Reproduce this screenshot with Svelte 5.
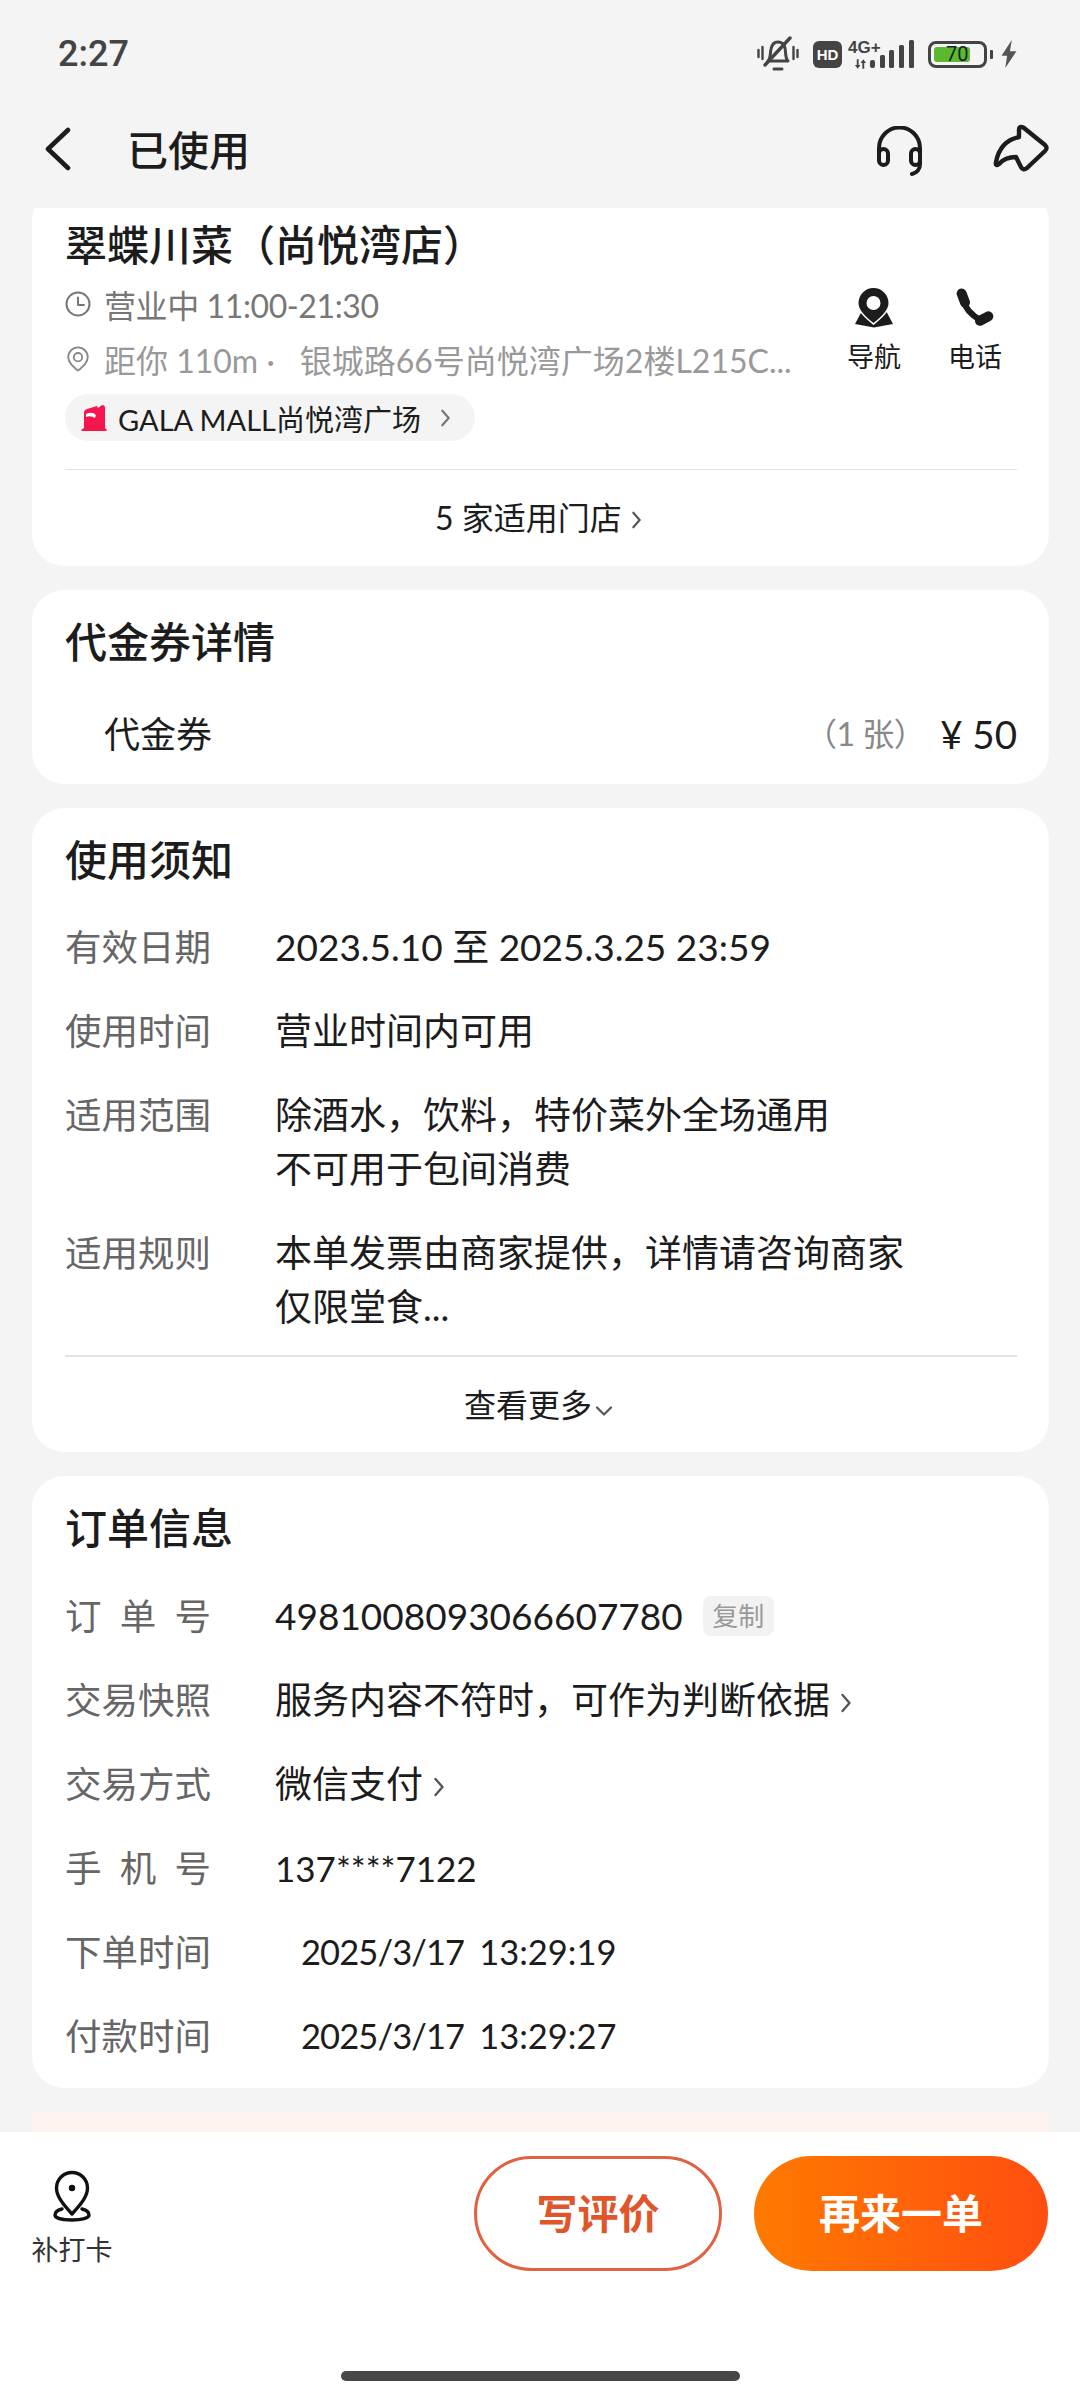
<script>
  const usage = [
    { label: '有效日期', lines: ['2023.5.10 至 2025.3.25 23:59'] },
    { label: '使用时间', lines: ['营业时间内可用'] },
    { label: '适用范围', lines: ['除酒水，饮料，特价菜外全场通用', '不可用于包间消费'] },
    { label: '适用规则', lines: ['本单发票由商家提供，详情请咨询商家', '仅限堂食...'] }
  ];
</script>

{#snippet chevron(cls)}
  <svg class={cls} viewBox="0 0 12 22" fill="none" stroke="currentColor" stroke-width="2.4" stroke-linecap="round" stroke-linejoin="round"><path d="M2.5 3l7 8-7 8" /></svg>
{/snippet}

<div class="page">
  <div class="status">
    <span class="time">2:27</span>
    <div class="status-icons">
      <svg class="ic-bell" viewBox="0 0 42 36" fill="none" stroke="#444" stroke-linecap="round">
        <path d="M1.5 14v7M5.5 11v12M36.5 11v12M40.5 14v7" stroke-width="2.4" />
        <path d="M11 25c3-3 2-8 3-12 1-5 4-7 7-7s6 2 7 6c1 5 0 10 3 13z" stroke-width="3" stroke-linejoin="round" />
        <path d="M17 33h8" stroke-width="3" />
        <path d="M8 29L33 2" stroke-width="3.4" />
      </svg>
      <span class="hd">HD</span>
      <div class="net">
        <span class="g4">4G+</span>
        <svg class="ic-arrows" viewBox="0 0 14 10" fill="#444"><path d="M3 0h2v6h2L4 10 1 6h2zM9 10h2V4h2L10 0 7 4h2z" /></svg>
      </div>
      <svg class="ic-signal" viewBox="0 0 44 28" fill="#444">
        <rect x="0" y="20" width="5" height="8" rx="2" />
        <rect x="10" y="15" width="5" height="13" rx="1.5" />
        <rect x="19" y="10" width="5" height="18" rx="1.5" />
        <rect x="29" y="5" width="5" height="23" rx="1.5" />
        <rect x="39" y="0" width="5" height="28" rx="1.5" />
      </svg>
      <div class="battery"><div class="battery-fill"></div><span>70</span></div>
      <div class="nub"></div>
      <svg class="ic-bolt" viewBox="0 0 18 30" fill="#555"><path d="M12 0L1 17h6L5 30l12-18h-7z" /></svg>
    </div>
  </div>

  <div class="nav">
    <svg class="back" viewBox="0 0 26 44" fill="none" stroke="#1c1c1c" stroke-width="4.6" stroke-linecap="round" stroke-linejoin="round"><path d="M23 3L3 22l20 19" /></svg>
    <h1>已使用</h1>
    <svg class="ic-headset" viewBox="0 0 47 50" fill="none" stroke="#1c1c1c" stroke-width="4" stroke-linecap="round" stroke-linejoin="round">
      <path d="M3 30V22a20.5 20.5 0 0 1 41 0v16c0 5-3 9-8 10" />
      <rect x="3" y="23" width="9" height="16" rx="4.5" />
      <rect x="35" y="23" width="9" height="16" rx="4.5" />
    </svg>
    <svg class="ic-share" viewBox="0 0 58 50" fill="none" stroke="#1c1c1c" stroke-width="4.4" stroke-linejoin="round"><path d="M26 13V6q0-5 5-2l21 17q3 3 0 6L34 44q-4 3-6-1l-5-10Q12 33 6 40q-4 3-3-2 4-21 23-25z" /></svg>
  </div>

  <div class="scroll">
    <section class="card shop">
      <h2>翠蝶川菜（尚悦湾店）</h2>
      <div class="shop-mid">
        <div class="shop-info">
          <div class="line open">
            <svg viewBox="0 0 26 26" fill="none" stroke="#777" stroke-width="2" stroke-linecap="round" stroke-linejoin="round"><circle cx="13" cy="13" r="11.5" /><path d="M13 6.5V14h6" /></svg>
            <span>营业中 11:00-21:30</span>
          </div>
          <div class="line addr">
            <svg viewBox="0 0 26 28" fill="none" stroke="#888" stroke-width="2" stroke-linejoin="round"><path d="M13 26.5C7 21.500 2.500 17.500 2.500 12a10.500 10.500 0 0 1 21 0c0 5.500-4.500 9.500-10.500 14.500z" /><circle cx="13" cy="12" r="4.500" /></svg>
            <span class="dist">距你 110m ·</span>
            <span class="street">银城路66号尚悦湾广场2楼L215C...</span>
          </div>
        </div>
        <div class="actions">
          <div class="action">
            <svg class="ic-nav" viewBox="0 0 40 40" fill="#1c1c1c">
              <path d="M1 36L9 21h22l8 15-19 3.500z" />
              <path d="M19.500 35C11 28 4.500 22 4.500 15a15 15 0 0 1 30 0c0 7-6.500 13-15 20z" stroke="#fff" stroke-width="3" paint-order="stroke" />
              <circle cx="19.500" cy="15" r="7" fill="#fff" />
            </svg>
            <span>导航</span>
          </div>
          <div class="action">
            <svg class="ic-phone" viewBox="0 0 36 36" fill="none" stroke="#1c1c1c" stroke-linecap="round">
              <path d="M6 5l3 8M22.500 29.500l7.500-4" stroke-width="9" />
              <path d="M7 10q3 12 16 19" stroke-width="5.500" />
            </svg>
            <span>电话</span>
          </div>
        </div>
      </div>
      <div class="chip">
        <svg viewBox="0 0 26 27" fill="#f5154f"><path d="M3 24V9q0-3 3-4l10-3 1 2 4-3q3 0 3 3v20l2 2q0 1-2 1H2q-2 0-2-1z" /><path d="M5 10q6-3 10 1l-1 3q-4-3-9-1z" fill="#fff" /></svg>
        <span>GALA MALL尚悦湾广场</span>
        {@render chevron('chev-chip')}
      </div>
      <div class="divider"></div>
      <div class="more">5 家适用门店{@render chevron('chev')}</div>
    </section>

    <section class="card voucher">
      <h2>代金券详情</h2>
      <div class="voucher-row">
        <span class="voucher-name">代金券</span>
        <span class="count">（1 张）</span>
        <span class="price">¥ 50</span>
      </div>
    </section>

    <section class="card">
      <h2>使用须知</h2>
      <div class="rows">
        {#each usage as row}
          <div class="row">
            <span class="label">{row.label}</span>
            <div class="value">
              {#each row.lines as l}<div>{l}</div>{/each}
            </div>
          </div>
        {/each}
      </div>
      <div class="divider dark"></div>
      <div class="more low">查看更多<svg class="chev-down" viewBox="0 0 18 12" fill="none" stroke="#555" stroke-width="2.200" stroke-linecap="round" stroke-linejoin="round"><path d="M2 2.500l7 7 7-7" /></svg></div>
    </section>

    <section class="card order">
      <h2>订单信息</h2>
      <div class="rows">
        <div class="row">
          <span class="label just">订单号</span>
          <div class="value">4981008093066607780<span class="copy">复制</span></div>
        </div>
        <div class="row">
          <span class="label">交易快照</span>
          <div class="value">服务内容不符时，可作为判断依据{@render chevron('chev-val')}</div>
        </div>
        <div class="row">
          <span class="label">交易方式</span>
          <div class="value">微信支付{@render chevron('chev-val')}</div>
        </div>
        <div class="row">
          <span class="label just">手机号</span>
          <div class="value phone">137****7122</div>
        </div>
        <div class="row">
          <span class="label">下单时间</span>
          <div class="value stamp"><span class="date">2025/3/17</span>13:29:19</div>
        </div>
        <div class="row">
          <span class="label">付款时间</span>
          <div class="value stamp"><span class="date">2025/3/17</span>13:29:27</div>
        </div>
      </div>
    </section>

    <div class="promo"></div>
  </div>

  <div class="bottom">
    <div class="bar">
      <div class="punch">
        <svg viewBox="0 0 38 52" fill="none" stroke="#111" stroke-width="3.400" stroke-linejoin="round" stroke-linecap="round">
          <path d="M19 44C9 33 3.500 26 3.500 18a15.500 15.500 0 0 1 31 0c0 8-5.500 15-15.500 26z" />
          <circle cx="19" cy="18" r="3.200" fill="#111" stroke="none" />
          <path d="M9 39c-4 1-7 3-7 6 0 3 7 5 17 5s17-2 17-5c0-3-3-5-7-6" />
        </svg>
        <span>补打卡</span>
      </div>
      <div class="buttons">
        <button class="btn outline"><span>写评价</span></button>
        <button class="btn solid"><span>再来一单</span></button>
      </div>
    </div>
    <div class="home"></div>
  </div>
</div>

<style>
  :global(body) { margin: 0; background: #f4f4f4; }
  .page {
    width: 1080px; height: 2400px; display: flex; flex-direction: column; overflow: hidden;
    background: #f4f4f4; color: #1c1c1c;
    font-family: Lato, "Noto Sans CJK SC", sans-serif; font-size: 37px;
  }

  .status { height: 108px; flex: none; display: flex; align-items: center; justify-content: space-between; padding: 0 62px 0 58px; box-sizing: border-box; }
  .time { font-family: Roboto, sans-serif; font-size: 36px; font-weight: 500; color: #444; }
  .status-icons { display: flex; align-items: center; }
  .ic-bell { width: 42px; height: 36px; margin-right: 14px; }
  .hd { width: 29px; height: 27px; border-radius: 6px; background: #444; color: #fff; font: 700 15px/27px "Liberation Sans", sans-serif; text-align: center; margin-right: 6px; }
  .net { width: 22px; display: flex; flex-direction: column; align-items: flex-start; height: 30px; }
  .g4 { font: 700 17px/17px "Liberation Sans", sans-serif; color: #444; white-space: nowrap; }
  .ic-arrows { width: 13px; height: 10px; margin: 3px 0 0 6px; }
  .ic-signal { width: 44px; height: 28px; margin-right: 14px; }
  .battery { position: relative; width: 59px; height: 27px; border: 3px solid #444; border-radius: 8px; box-sizing: border-box; }
  .battery-fill { position: absolute; left: 3px; top: 3px; bottom: 3px; width: 36px; background: #5cb82c; border-radius: 3px; }
  .battery span { position: absolute; left: 15px; top: 0; font: 20px/21px Roboto, sans-serif; color: #123; }
  .nub { width: 3px; height: 9px; background: #444; margin: 0 7px 0 3px; border-radius: 1px; }
  .ic-bolt { width: 18px; height: 28px; }

  .nav { height: 100px; flex: none; display: flex; align-items: center; padding: 0 32px 18px 45px; box-sizing: border-box; }
  .back { width: 26px; height: 44px; }
  h1 { margin: -2px 0 0 56px; font-size: 41px; font-weight: 500; flex: 1; }
  .ic-headset { width: 47px; height: 50px; margin-right: 70px; margin-top: 4px; }
  .ic-share { width: 58px; height: 50px; margin-right: -3px; }

  .scroll { flex: 1; min-height: 0; overflow: hidden; display: flex; flex-direction: column; gap: 24px; padding: 0 31px 0 32px; }
  .card { flex: none; background: #fff; border-radius: 32px; padding: 27px 32px 0 33px; }
  h2 { margin: 0; font-size: 42px; line-height: 50px; font-weight: 500; }
  .order { padding-bottom: 25px; }
  .order .rows { margin-top: 36px; }

  .shop { margin-top: -18px; padding-top: 30px; height: 376px; box-sizing: border-box; }
  .shop-mid { display: flex; justify-content: space-between; height: 88px; margin-top: 15px; }
  .line { display: flex; align-items: center; height: 55px; font-size: 32px; white-space: nowrap; }
  .line svg { width: 26px; height: 26px; margin-right: 13px; flex: none; }
  .open { color: #777; margin-top: -9px; letter-spacing: -0.4px; }
  .addr { color: #999; }
  .dist { margin-right: 25px; }
  .actions { display: flex; gap: 43px; margin: 3px 13px 0 0; }
  .action { display: flex; flex-direction: column; align-items: center; width: 58px; font-size: 27px; line-height: 32px; }
  .action svg { width: 40px; height: 40px; margin-bottom: 13px; }
  .ic-phone { width: 36px; }
  .chip { display: inline-flex; align-items: center; height: 47px; margin-top: 21px; padding: 0 24px 0 16px; border-radius: 24px; background: #f4f4f4; font-size: 29px; color: #1c1c1c; }
  .chip > svg:first-child { width: 26px; height: 27px; margin-right: 11px; }
  .chev-chip { width: 11px; height: 20px; margin-left: 19px; color: #777; }
  .divider { height: 1px; background: #e2e2e2; margin-top: 28px; }
  .divider.dark { height: 2px; margin-top: 21px; }
  .more { text-align: center; font-size: 32px; line-height: 48px; margin-top: 24px; padding-right: 5px; }
  .more.low { margin-top: 24px; padding-bottom: 23px; }
  .chev { width: 11px; height: 20px; margin-left: 9px; color: #555; }
  .chev-down { width: 18px; height: 12px; margin-left: 3px; }

  .voucher { height: 194px; box-sizing: border-box; }
  .voucher-row { display: flex; align-items: center; margin-top: 40px; line-height: 54px; }
  .voucher-name { flex: 1; padding-left: 39px; font-size: 36px; }
  .count { color: #888; font-size: 32px; margin-right: 15px; letter-spacing: -0.5px; }
  .price { font-size: 38.5px; }

  .rows { display: flex; flex-direction: column; gap: 30px; margin-top: 35px; }
  .row { display: flex; line-height: 54px; }
  .label { width: 146px; margin-right: 64px; flex: none; color: #666; font-size: 36.5px; white-space: nowrap; }
  .just { text-align-last: justify; white-space: normal; }
  .value { flex: 1; display: block; }
  .phone { font-size: 35px; }
  .stamp { padding-left: 26px; font-size: 34.5px; }
  .date { letter-spacing: -0.9px; margin-right: 15px; }
  .copy { display: inline-block; vertical-align: 4px; width: 71px; height: 40px; margin-left: 20px; border-radius: 8px; background: #f2f2f2; color: #999; font-size: 26px; line-height: 40px; text-align: center; }
  .chev-val { width: 12px; height: 22px; margin-left: 10px; color: #555; }

  .promo { flex: none; height: 60px; background: #fff3ef; }

  .bottom { height: 268px; flex: none; background: #fff; display: flex; flex-direction: column; align-items: center; }
  .bar { width: 100%; height: 239px; box-sizing: border-box; padding: 24px 32px 0 32px; display: flex; justify-content: space-between; }
  .punch { display: flex; flex-direction: column; align-items: center; font-size: 27px; line-height: 36px; color: #333; width: 80px; white-space: nowrap; }
  .punch svg { width: 38px; height: 52px; margin: 14px 0 10px; }
  .buttons { display: flex; gap: 32px; }
  .btn { height: 115px; border-radius: 58px; font-family: inherit; font-size: 41px; font-weight: 700; box-sizing: border-box; padding: 0 0 5px; }
  .outline { width: 248px; background: #fff; border: 3px solid #e06240; color: #e0562a; }
  .solid { width: 294px; border: 0; color: #fff; background: linear-gradient(90deg, #ff7a00, #ff4e10); }
  .home { width: 399px; height: 10px; border-radius: 5px; background: #484848; }
</style>
